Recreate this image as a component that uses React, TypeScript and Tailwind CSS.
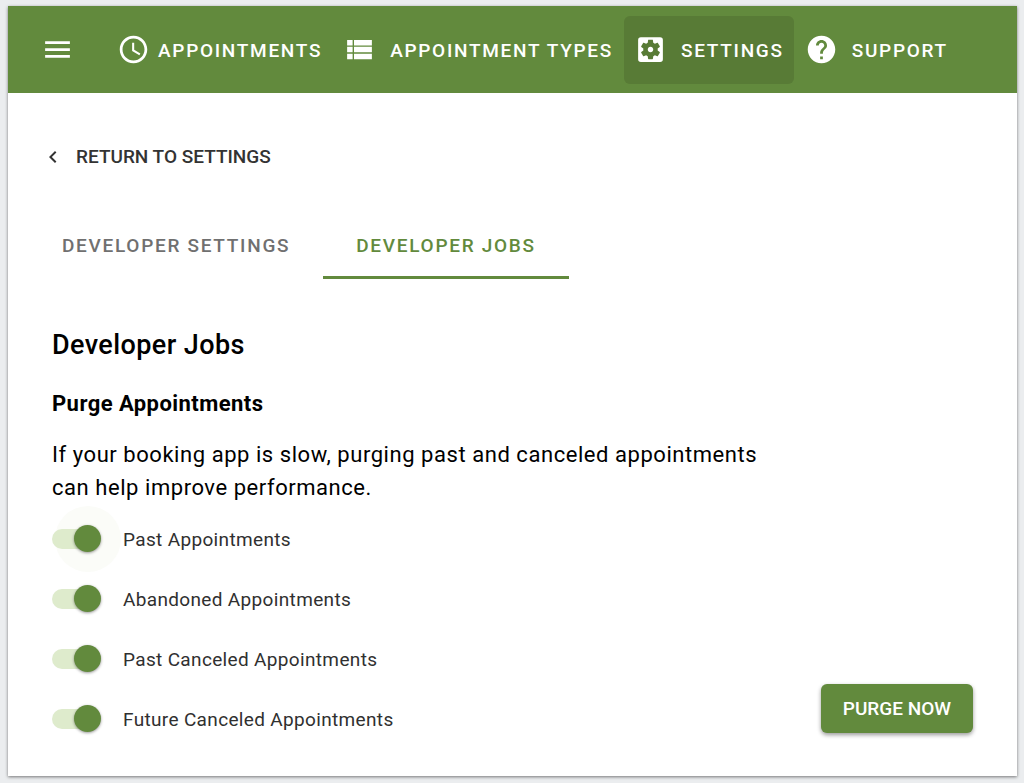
import { useState } from 'react';
import type { ReactNode } from 'react';
import {
  MdAccessTime,
  MdChevronLeft,
  MdHelp,
  MdMenu,
  MdSettingsApplications,
} from 'react-icons/md';

function ListIcon() {
  return (
    <svg viewBox="0 0 24 24" className="size-[33px] shrink-0" fill="currentColor" aria-hidden="true">
      <path d="M3 14h4v-4H3v4zm0 5h4v-4H3v4zM3 9h4V5H3v4zm5 5h13v-4H8v4zm0 5h13v-4H8v4zM8 5v4h13V5H8z" />
    </svg>
  );
}

type NavItemProps = {
  icon: ReactNode;
  label: string;
  active?: boolean;
  tight?: boolean;
};

function NavItem({ icon, label, active = false, tight = false }: NavItemProps) {
  return (
    <a
      href="#"
      aria-current={active ? 'page' : undefined}
      className={`flex h-[68px] items-center rounded-md px-2.5 text-[19px] font-medium tracking-[0.09em] whitespace-nowrap uppercase ${
        active ? 'bg-[#587b36]' : ''
      } ${tight ? 'gap-2' : 'gap-3.5'}`}
    >
      {icon}
      <span className="pt-[3px]">{label}</span>
    </a>
  );
}

type SwitchProps = {
  id: string;
  label: string;
  checked: boolean;
  focused?: boolean;
  onChange: (checked: boolean) => void;
};

function Switch({ id, label, checked, focused = false, onChange }: SwitchProps) {
  return (
    <div className="flex h-[60px] items-center gap-[22px]">
      <span className="relative flex h-7 w-[49px] shrink-0 items-center">
        {focused && (
          <span className="absolute -top-[19px] left-[3px] size-[66px] rounded-full bg-[#fbfcf8]" />
        )}
        <input
          id={id}
          type="checkbox"
          role="switch"
          checked={checked}
          onChange={(event) => onChange(event.target.checked)}
          className="peer relative h-5 w-[44px] cursor-pointer appearance-none rounded-full bg-neutral-300 outline-none checked:bg-[#deebcc]"
        />
        <span className="pointer-events-none absolute top-0 left-0 size-[27px] rounded-full bg-neutral-50 shadow-[0_1px_3px_rgba(0,0,0,0.4)] peer-checked:left-[22px] peer-checked:bg-[#628a3d]" />
      </span>
      <label htmlFor={id} className="cursor-pointer pt-0.5 text-[19px] tracking-[0.018em] text-[#303030]">
        {label}
      </label>
    </div>
  );
}

const jobs = [
  { id: 'past', label: 'Past Appointments' },
  { id: 'abandoned', label: 'Abandoned Appointments' },
  { id: 'past-canceled', label: 'Past Canceled Appointments' },
  { id: 'future-canceled', label: 'Future Canceled Appointments' },
];

export default function App() {
  const [enabled, setEnabled] = useState<Record<string, boolean>>({
    past: true,
    abandoned: true,
    'past-canceled': true,
    'future-canceled': true,
  });

  return (
    <div className="flex min-h-screen flex-col bg-[#ebedef] pt-1.5 pr-[7px] pb-[7px] pl-2 font-[Roboto,sans-serif]">
      <div className="flex grow flex-col bg-white shadow-[0_1px_3px_rgba(0,0,0,0.5)]">
        <header className="flex h-[87px] items-center bg-[#628a3d] px-[33px] text-white">
          <button type="button" aria-label="Menu" className="mr-[33px]">
            <MdMenu className="size-[33px]" />
          </button>
          <nav className="flex items-center gap-px">
            <NavItem icon={<MdAccessTime className="size-[33px] shrink-0" />} label="Appointments" tight />
            <NavItem icon={<ListIcon />} label="Appointment Types" />
            <NavItem icon={<MdSettingsApplications className="size-[33px] shrink-0" />} label="Settings" active />
            <NavItem icon={<MdHelp className="size-[33px] shrink-0" />} label="Support" />
          </nav>
        </header>

        <div className="flex px-[33px] pt-[50px]">
          <a href="#" className="flex h-7 items-center gap-[11px] text-[19px] font-medium text-[#333333] uppercase">
            <MdChevronLeft className="size-6" />
            Return to Settings
          </a>
        </div>

        <div role="tablist" className="mt-[42px] flex px-[21px]">
          <button
            type="button"
            role="tab"
            aria-selected="false"
            className="h-[66px] border-b-3 border-transparent px-[33px] pt-[3px] text-[19px] font-medium tracking-[0.09em] text-[#707070] uppercase"
          >
            Developer Settings
          </button>
          <button
            type="button"
            role="tab"
            aria-selected="true"
            className="h-[66px] border-b-3 border-[#628a3d] px-[33px] pt-[3px] text-[19px] font-medium tracking-[0.09em] text-[#628a3d] uppercase"
          >
            Developer Jobs
          </button>
        </div>

        <main className="px-11 pt-12 pb-[27px] text-black">
          <h1 className="text-[27px] leading-9 font-medium tracking-[0.015em]">Developer Jobs</h1>
          <h2 className="mt-[25px] text-[22px] leading-8 font-bold tracking-[0.02em]">Purge Appointments</h2>
          <p className="mt-[18px] max-w-[720px] text-[22px] leading-[33px] tracking-wide">
            If your booking app is slow, purging past and canceled appointments can help improve performance.
          </p>
          <div className="mt-[5px] flex items-end justify-between">
            <div>
              {jobs.map((job, index) => (
                <Switch
                  key={job.id}
                  id={job.id}
                  label={job.label}
                  checked={enabled[job.id]}
                  focused={index === 0}
                  onChange={(value) => setEnabled({ ...enabled, [job.id]: value })}
                />
              ))}
            </div>
            <button
              type="button"
              className="mb-4 h-[49px] rounded-md bg-[#628a3d] px-[22px] pt-0.5 text-[19px] font-medium text-white uppercase shadow-[0_2px_4px_rgba(0,0,0,0.4)]"
            >
              Purge Now
            </button>
          </div>
        </main>
      </div>
    </div>
  );
}
